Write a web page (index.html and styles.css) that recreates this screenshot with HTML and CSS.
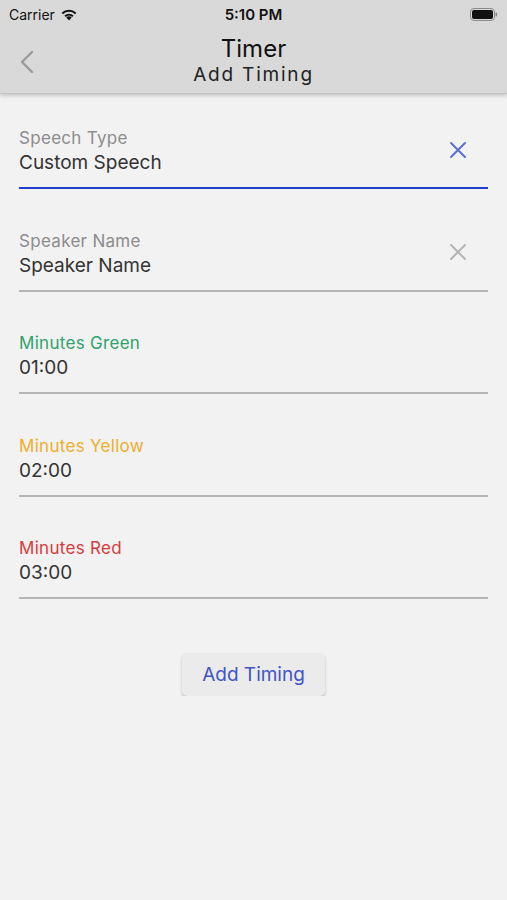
FILE: index.html
```html
<!DOCTYPE html>
<html lang="en">
<head>
    <meta charset="UTF-8">
    <meta name="viewport" content="width=device-width, initial-scale=1.0">
    <title>Timer - Add Timing</title>
    <link rel="stylesheet" href="styles.css">
</head>
<body>
    <div class="header">
        <div class="status-bar">
            <div class="carrier">Carrier
                <svg class="wifi" width="18" height="13" viewBox="0 0 18 13">
                    <path d="M9 12.5 L6.3 9.6 A3.9 3.9 0 0 1 11.7 9.6 Z" fill="#111"/>
                    <path d="M4.4 7.6 A6.6 6.6 0 0 1 13.6 7.6 L12.3 9 A4.8 4.8 0 0 0 5.7 9 Z" fill="#111"/>
                    <path d="M1.6 4.8 A10.5 10.5 0 0 1 16.4 4.8 L15 6.2 A8.5 8.5 0 0 0 3 6.2 Z" fill="#111"/>
                </svg>
            </div>
            <div class="clock">5:10 PM</div>
            <div class="battery">
                <svg width="28" height="13" viewBox="0 0 28 13">
                    <rect x="0.5" y="0.5" width="24" height="12" rx="3.5" fill="none" stroke="#8a8a8a"/>
                    <rect x="2" y="2" width="21" height="9" rx="2" fill="#111"/>
                    <rect x="25.5" y="4.5" width="1.6" height="4" rx="0.8" fill="#8a8a8a"/>
                </svg>
            </div>
        </div>
        <div class="nav-bar">
            <svg class="back" width="14" height="24" viewBox="0 0 14 24">
                <path d="M12 2 L2 12 L12 22" fill="none" stroke="#9a9a9a" stroke-width="2.4" stroke-linecap="round" stroke-linejoin="round"/>
            </svg>
            <div class="titles">
                <div class="title">Timer</div>
                <div class="subtitle">Add Timing</div>
            </div>
        </div>
    </div>

    <div class="form">
        <div class="field focused">
            <div class="field-text">
                <div class="label">Speech Type</div>
                <div class="value">Custom Speech</div>
            </div>
            <svg class="clear" width="18" height="18" viewBox="0 0 18 18">
                <path d="M2 2 L16 16 M16 2 L2 16" stroke="#5b6fd3" stroke-width="2" stroke-linecap="round"/>
            </svg>
        </div>
        <div class="field">
            <div class="field-text">
                <div class="label">Speaker Name</div>
                <div class="value">Speaker Name</div>
            </div>
            <svg class="clear" width="18" height="18" viewBox="0 0 18 18">
                <path d="M2 2 L16 16 M16 2 L2 16" stroke="#b4b4b4" stroke-width="2" stroke-linecap="round"/>
            </svg>
        </div>
        <div class="field">
            <div class="field-text">
                <div class="label green">Minutes Green</div>
                <div class="value">01:00</div>
            </div>
        </div>
        <div class="field">
            <div class="field-text">
                <div class="label yellow">Minutes Yellow</div>
                <div class="value">02:00</div>
            </div>
        </div>
        <div class="field">
            <div class="field-text">
                <div class="label red">Minutes Red</div>
                <div class="value">03:00</div>
            </div>
        </div>

        <div class="actions">
            <button class="add-btn">Add Timing</button>
        </div>
    </div>
</body>
</html>
```

FILE: styles.css
```css
body {
    font-family: Inter, "Noto Sans", sans-serif;
    background-color: #f2f2f2;
    color: #333;
    margin: 0;
}
.header {
    background-color: #d9d9d9;
    box-shadow: 0 2px 4px rgba(0, 0, 0, 0.18);
    border-bottom: 1px solid #c4c4c4;
}
.status-bar {
    height: 28px;
    display: flex;
    align-items: center;
    justify-content: space-between;
    padding: 0 9px;
    position: relative;
}
.carrier {
    font-size: 14px;
    color: #111;
    display: flex;
    align-items: center;
    gap: 5px;
}
.clock {
    position: absolute;
    left: 0;
    right: 0;
    text-align: center;
    font-size: 15px;
    font-weight: 600;
    color: #111;
}
.battery {
    display: flex;
    align-items: center;
}
.nav-bar {
    height: 65px;
    display: flex;
    align-items: center;
    position: relative;
}
.back {
    margin-left: 20px;
    margin-top: 2px;
}
.titles {
    position: absolute;
    left: 0;
    right: 0;
    top: 6px;
    text-align: center;
}
.title {
    font-size: 24px;
    line-height: 30px;
    color: #111;
}
.subtitle {
    font-size: 19px;
    line-height: 22px;
    letter-spacing: 1.8px;
    color: #222;
}
.form {
    padding: 34px 19px 0 19px;
}
.field {
    display: flex;
    align-items: center;
    border-bottom: 2px solid #b5b5b5;
    padding-bottom: 12px;
    margin-bottom: 41.5px;
}
.field.focused {
    border-bottom-color: #1f3fcc;
}
.field-text {
    flex: 1;
}
.label {
    font-size: 17px;
    line-height: 20px;
    letter-spacing: 0.3px;
    margin-bottom: 2px;
    color: #8c8c8c;
}
.label.green {
    color: #2ea36b;
}
.label.yellow {
    color: #f0ad2c;
}
.label.red {
    color: #d93a3a;
}
.value {
    font-size: 19px;
    line-height: 25px;
    color: #333;
}
.clear {
    margin-right: 21px;
    margin-bottom: 4px;
}
.actions {
    display: flex;
    justify-content: center;
    padding-top: 12px;
}
.add-btn {
    font-family: Inter, "Noto Sans", sans-serif;
    font-size: 19px;
    color: #3f55c6;
    background-color: #ebebeb;
    border: none;
    border-radius: 5px;
    padding: 0 20px;
    height: 43px;
    box-shadow: 0 2px 3px rgba(0, 0, 0, 0.22);
    cursor: pointer;
}
```
